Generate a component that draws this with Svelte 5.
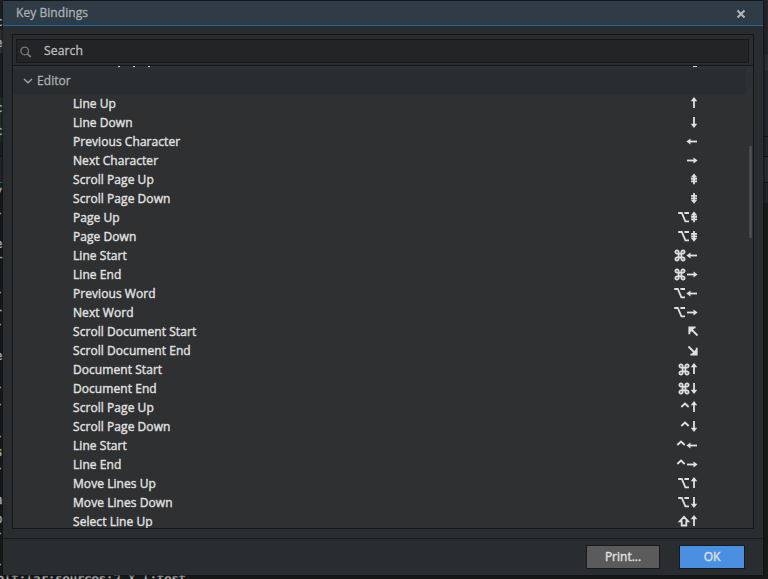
<script>
  const rows = [
    ['Line Up', ['up']], ['Line Down', ['down']], ['Previous Character', ['left']], ['Next Character', ['right']],
    ['Scroll Page Up', ['pgup']], ['Scroll Page Down', ['pgdn']], ['Page Up', ['opt', 'pgup']], ['Page Down', ['opt', 'pgdn']],
    ['Line Start', ['cmd', 'left']], ['Line End', ['cmd', 'right']], ['Previous Word', ['opt', 'left']], ['Next Word', ['opt', 'right']],
    ['Scroll Document Start', ['home']], ['Scroll Document End', ['end']], ['Document Start', ['cmd', 'up']], ['Document End', ['cmd', 'down']],
    ['Scroll Page Up', ['ctrl', 'up']], ['Scroll Page Down', ['ctrl', 'down']], ['Line Start', ['ctrl', 'left']], ['Line End', ['ctrl', 'right']],
    ['Move Lines Up', ['opt', 'up']], ['Move Lines Down', ['opt', 'down']], ['Select Line Up', ['shift', 'up']]
  ];
  // each glyph: width, stroked path, filled path
  const glyphs = {
    up: [6, 'M3 14V5', 'M3 3L6.3 7.3H-.3Z'],
    down: [6, 'M3 4V13', 'M3 15L6.3 10.7H-.3Z'],
    left: [10, 'M10 9.5H2', 'M-.6 9.5L3.5 6.4V12.6Z'],
    right: [10, 'M0 9.5H8', 'M10.6 9.5L6.5 6.4V12.6Z'],
    pgup: [6, 'M3 14.3V6M0 8.8H6M0 11.4H6', 'M3 3.5L6.3 7.5H-.3Z'],
    pgdn: [6, 'M3 4V12M0 6.9H6M0 9.4H6', 'M3 14.7L6.3 10.7H-.3Z'],
    opt: [10, 'M-.8 5H2.8L6.4 13.4H10M5.4 5H10', ''],
    cmd: [10, 'M3.6 7.6H6.4V11.4H3.6ZM3.6 7.6H2.1A1.6 1.6 0 1 1 3.6 6ZM6.4 7.6V6A1.6 1.6 0 1 1 7.9 7.6ZM6.4 11.4H7.9A1.6 1.6 0 1 1 6.4 13ZM3.6 11.4V13A1.6 1.6 0 1 1 2.1 11.4Z', ''],
    ctrl: [8, 'M.3 9L4 5.5L7.7 9', ''],
    shift: [10, 'M5 4.9L9.2 9.4H7.3V13.5H2.7V9.4H.8Z', ''],
    home: [8, 'M2.5 7.5L8.5 13.5M.3 12.2V5.4H6.6', 'M.5 5.5H6.2L.5 11.2Z'],
    end: [8, 'M-.5 5.5L5.5 11.5M7.7 6.8V13.6H1.4', 'M7.5 13.5H1.8L7.5 7.8Z']
  };
  const fragments = [
    [15, 'c'], [36, 'e'], [101, 'c'], [124, 'c'], [186, '/'], [206, '-'], [237, 'e'], [253, 'r'],
    [285, '-'], [300, 'l'], [317, '-'], [349, 'e'], [380, '-'], [397, '-'], [429, '-'], [445, 's'], [461, '-'],
    [493, 'a'], [512, 'o'], [526, '-'], [557, '-']
  ];
</script>

<div class="stage">
  <div class="back"></div>
  <div class="green"></div>
  <div class="side"></div>
  {#each fragments as [y, t]}<span class="frag" style="top:{y}px">{t}</span>{/each}
  <div class="console">nlt:lar:sources:2 X l:test</div>
  <section class="dialog">
    <header>
      <span>Key Bindings</span>
      <svg width="10" height="10" viewBox="0 0 10 10"><path d="M1.5 1.5L8.5 8.5M8.5 1.5L1.5 8.5" stroke="#b5b6b6" stroke-width="2" /></svg>
    </header>
    <div class="panel">
      <div class="search">
        <div class="field">
          <svg width="12" height="12" viewBox="0 0 12 12" fill="none" stroke="#747676"><circle cx="4.7" cy="4.9" r="3.8" stroke-width="1.4" /><path d="M7.5 7.8L10.7 11" stroke-width="1.8" /></svg>
          <span>Search</span>
        </div>
      </div>
      <div class="list">
        <div class="clipped"><i></i><i></i><i></i><b></b></div>
        <div class="group">
          <svg width="10" height="6" viewBox="0 0 10 6" fill="none" stroke="#a4a6a6" stroke-width="1.4"><path d="M1 1L5 4.8L9 1" /></svg>
          <span>Editor</span>
        </div>
        {#each rows as [name, keys]}
          <div class="row">
            <span>{name}</span>
            <div class="keys">
              {#each keys as k}
                <svg width={glyphs[k][0]} height="19" viewBox="0 0 {glyphs[k][0]} 19">
                  <path d={glyphs[k][1]} fill="none" stroke="#dfe0e0" stroke-width="1.8" />
                  {#if glyphs[k][2]}<path d={glyphs[k][2]} fill="#dfe0e0" />{/if}
                </svg>
              {/each}
            </div>
          </div>
        {/each}
        <div class="thumb"></div>
      </div>
    </div>
    <footer>
      <button>Print...</button>
      <button class="ok">OK</button>
    </footer>
  </section>
</div>

<style>
  .stage { position: relative; width: 768px; height: 579px; overflow: hidden; background: #191a1a; font-family: "Open Sans", sans-serif; font-size: 12px; letter-spacing: 0.06px; box-sizing: border-box; padding: 1px 0 0 3px; }
  .back { position: absolute; left: 0; top: 0; width: 3px; height: 190px; background: linear-gradient(#202326 30px, #35383a 30px, #35383a 53px, #1d2124 53px, #1d2124 156px, #101213 156px, #101213 157px, #25292c 157px, #25292c 182px, #347490 182px, #347490 183px, #202326 183px); }
  .green { position: absolute; left: 0; top: 97px; width: 3px; height: 44px; background: #203525; }
  .side { position: absolute; right: 0; top: 0; width: 5px; height: 203px; background: linear-gradient(#24272b 55px, #2a3034 55px, #2a3034 71px, #23272f 71px, #23272f 136px, #101112 136px, #101112 137px, #252729 137px, #252729 156px, #101112 156px, #101112 157px, #2a2c31 157px, #2a2c31 182px, #111213 182px, #111213 183px, #242628 183px); }
  .frag { position: absolute; left: -5px; width: 8px; font: 13px/13px "DejaVu Sans Mono", monospace; color: #c9caca; -webkit-text-stroke: 0.5px #c9caca; overflow: hidden; }
  .console { position: absolute; left: -3px; top: 572px; font: 12px/14px "DejaVu Sans Mono", monospace; letter-spacing: 0.05px; color: #c9caca; -webkit-text-stroke: 0.4px #c9caca; white-space: pre; }
  .dialog { position: relative; width: 760px; height: 574px; background: #292d30; box-shadow: 0 0 3px 1px #111212; display: flex; flex-direction: column; }
  header { box-sizing: border-box; height: 25px; background: #2f3b47; border-bottom: 1px solid #2067a7; display: flex; align-items: center; justify-content: space-between; padding: 0 17px 2px 13px; color: #adb0b2; -webkit-text-stroke: 0.3px #adb0b2; flex: none; }
  header svg { position: relative; top: 2px; }
  .panel { box-sizing: border-box; width: 742px; height: 495px; margin: 8px 0 9px 9px; border: 1px solid #151617; display: flex; flex-direction: column; flex: none; }
  .search { height: 31px; padding: 4px 4px 0 3px; box-sizing: border-box; border-bottom: 1px solid #151617; }
  .field { box-sizing: border-box; height: 24px; border: 1px solid #17191a; background: #232425; display: flex; align-items: center; color: #bdbebe; -webkit-text-stroke: 0.3px #bdbebe; padding: 0 0 2px 3px; gap: 12px; font-size: 12.2px; }
  .field svg { position: relative; top: 1.5px; }
  .list { position: relative; flex: 1; overflow: hidden; background: #2f3032; }
  .clipped { height: 3px; display: flex; padding-left: 105px; }
  i { width: 2px; height: 1px; background: #d5d6d6; margin-right: 13px; }
  b { width: 4px; height: 1px; background: #d5d6d6; margin-left: 530px; }
  .group { height: 25px; width: 733px; box-sizing: border-box; background: #292d2f; display: flex; align-items: center; padding: 0 0 2px 10px; gap: 4px; color: #aeb0b0; -webkit-text-stroke: 0.3px #aeb0b0; }
  .row { height: 19px; display: flex; justify-content: space-between; padding: 0 56px 0 60px; color: #dedfdf; line-height: 19px; -webkit-text-stroke: 0.45px #dedfdf; }
  .keys { display: flex; gap: 2px; }
  .keys svg { overflow: visible; display: block; }
  .thumb { position: absolute; right: 1px; top: 80px; width: 3px; height: 92px; box-sizing: border-box; background: #505153; border: 1px solid #47484a; }
  footer { flex: 1; border-top: 1px solid #17191a; display: flex; justify-content: flex-end; gap: 19px; padding: 6px 18px 0 0; }
  button { box-sizing: border-box; width: 74px; height: 24px; border: 1px solid #17191a; background: #5b5b5b; color: #dedede; font: 12px "Open Sans", sans-serif; padding: 0 0 2px; -webkit-text-stroke: 0.45px #dedede; }
  .ok { width: 66px; background: #4a90e2; }
</style>
